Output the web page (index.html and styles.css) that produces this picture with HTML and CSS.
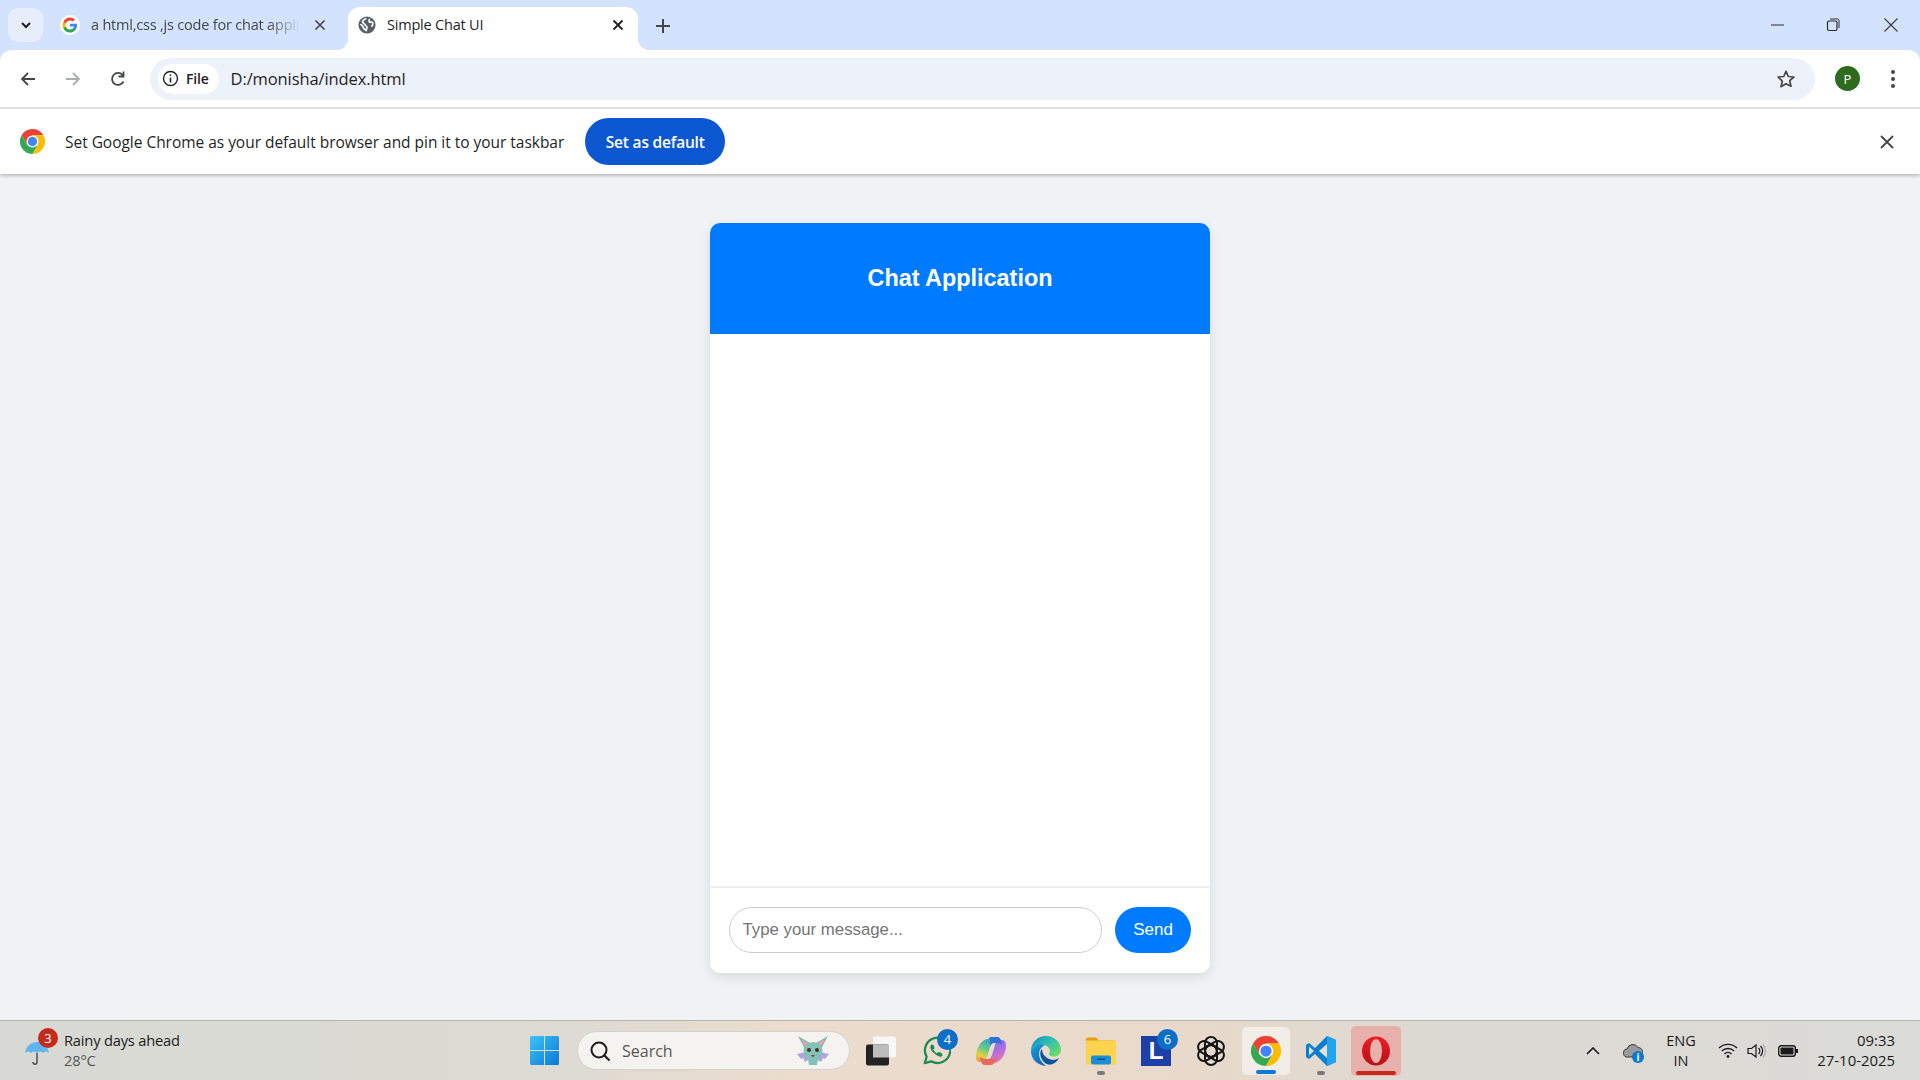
FILE: index.html
```html
<!DOCTYPE html>
<html>
<head>
    <title>Simple Chat UI</title>
    <link rel="stylesheet" href="styles.css">
</head>
<body>
    <svg class="defs" width="0" height="0">
        <symbol id="chrome" viewBox="0 0 48 48">
            <path d="M24 24 L24 12 H44.8 A24 24 0 0 0 3.2 12 L13.6 30 Z" fill="#ea4335"/>
            <path d="M24 24 L13.6 30 L3.2 12 A24 24 0 0 0 24 48 L34.4 30 Z" fill="#34a853"/>
            <path d="M24 24 L34.4 30 L24 48 A24 24 0 0 0 44.8 12 H24 Z" fill="#fbbc04"/>
            <circle cx="24" cy="24" r="11.5" fill="#fff"/>
            <circle cx="24" cy="24" r="9" fill="#4285f4"/>
        </symbol>
    </svg>

    <div class="tabstrip">
        <div class="tabsearch">
            <svg width="14" height="14" viewBox="0 0 14 14"><path d="M3 5l4 4 4-4" fill="none" stroke="#1f1f1f" stroke-width="2"/></svg>
        </div>
        <div class="tab">
            <svg class="favicon google" viewBox="0 0 48 48">
                <circle cx="24" cy="24" r="24" fill="#fff"/>
                <path d="M41 24.6c0-1.3-.1-2.5-.3-3.6H24v6.8h9.6c-.4 2.2-1.7 4.100-3.500 5.300v4.400h5.700C39.100 34.400 41 29.900 41 24.600z" fill="#4285f4"/>
                <path d="M24 42c4.800 0 8.800-1.600 11.800-4.400l-5.700-4.400c-1.600 1.100-3.700 1.700-6.100 1.700-4.700 0-8.600-3.100-10-7.400H8.100v4.600C11 37.900 17 42 24 42z" fill="#34a853"/>
                <path d="M14 27.500c-.4-1.100-.6-2.300-.6-3.500s.2-2.400.6-3.500v-4.600H8.100C6.800 18.300 6 21.100 6 24s.8 5.700 2.100 8.100z" fill="#fbbc04"/>
                <path d="M24 13.100c2.600 0 5 .9 6.800 2.700l5.100-5.100C32.800 7.800 28.800 6 24 6 17 6 11 10.100 8.100 15.900l5.900 4.600c1.400-4.300 5.300-7.400 10-7.400z" fill="#ea4335"/>
            </svg>
            <span class="tab-title faded">a html,css ,js code for chat appli</span>
            <svg class="tab-x" width="12" height="12" viewBox="0 0 12 12"><path d="M1.500 1.500l9 9M10.500 1.500l-9 9" stroke="#444746" stroke-width="1.600"/></svg>
        </div>
        <div class="tab active">
            <svg class="favicon" viewBox="0 0 20 20">
                <circle cx="10" cy="10" r="9.500" fill="#5b5e66"/>
                <path d="M9 2.500c-1 1.500-3.500 1.800-4 3.500-.3 1.300 1 2 2 2.800 1 .7 1 1.700 1.800 2.200.8.400 1.500.9 1.300 2-.2 1-1 1.500-.9 3-1.800-.5-3.300-2.400-4-4.500-.5-1.300-1.800-1.500-2.600-2.300M12.500 3c.5 1.500-1 2.500 0 3.500s3-.5 4 1c.3 1.500-.5 3-1.500 4.500" fill="none" stroke="#fff" stroke-width="1.800"/>
            </svg>
            <span class="tab-title">Simple Chat UI</span>
            <svg class="tab-x" width="12" height="12" viewBox="0 0 12 12"><path d="M1.500 1.500l9 9M10.500 1.500l-9 9" stroke="#1f1f1f" stroke-width="1.800"/></svg>
        </div>
        <svg class="newtab" width="16" height="16" viewBox="0 0 16 16"><path d="M8 1v14M1 8h14" stroke="#444746" stroke-width="2"/></svg>
        <div class="winctl">
            <svg width="14" height="14" viewBox="0 0 14 14"><path d="M0 7h13" stroke="#2a2a2a" stroke-width="1"/></svg>
            <svg width="14" height="14" viewBox="0 0 14 14"><rect x="1.500" y="3" width="9.500" height="9.500" rx="1.500" fill="none" stroke="#2a2a2a" stroke-width="1.200"/><path d="M4 1h7.500a1.500 1.500 0 0 1 1.500 1.500V10" fill="none" stroke="#2a2a2a" stroke-width="1"/></svg>
            <svg width="14" height="14" viewBox="0 0 14 14"><path d="M.5.500l13 13M13.500.500l-13 13" stroke="#3a3a3a" stroke-width="1.100"/></svg>
        </div>
    </div>

    <div class="toolbar">
        <svg class="nav" width="18" height="18" viewBox="0 0 18 18"><path d="M16 9H3M9 3L3 9l6 6" fill="none" stroke="#444746" stroke-width="1.800"/></svg>
        <svg class="nav" width="18" height="18" viewBox="0 0 18 18"><path d="M2 9h13M9 3l6 6-6 6" fill="none" stroke="#a9abad" stroke-width="1.800"/></svg>
        <svg class="nav" width="18" height="18" viewBox="0 0 18 18"><path d="M14.500 11.500A6 6 0 1 1 13.600 5M14.500 1.500v5h-5" fill="none" stroke="#444746" stroke-width="1.800"/></svg>
        <div class="omnibox">
            <div class="chip">
                <svg width="17" height="17" viewBox="0 0 17 17"><circle cx="8.500" cy="8.500" r="7" fill="none" stroke="#1f1f1f" stroke-width="1.400"/><path d="M8.500 7.500v5M8.500 4.500v1.600" stroke="#1f1f1f" stroke-width="1.500"/></svg>
                <span>File</span>
            </div>
            <span class="url">D:/monisha/index.html</span>
            <svg class="star" width="20" height="20" viewBox="0 0 20 20"><path d="M10 2.300l2.300 5.200 5.600.5-4.200 3.700 1.300 5.500L10 14.800l-5 2.900 1.300-5.500L2.100 8l5.600-.5z" fill="none" stroke="#444746" stroke-width="1.700" stroke-linejoin="round"/></svg>
        </div>
        <div class="avatar">P</div>
        <div class="kebab"><i></i><i></i><i></i></div>
    </div>

    <div class="infobar">
        <svg class="infobar-logo"><use href="#chrome"/></svg>
        <span class="infobar-text">Set Google Chrome as your default browser and pin it to your taskbar</span>
        <div class="set-default">Set as default</div>
        <svg class="infobar-x" width="14" height="14" viewBox="0 0 14 14"><path d="M1 1l12 12M13 1L1 13" stroke="#444746" stroke-width="1.800"/></svg>
    </div>

    <div class="page">
        <div class="chat">
            <div class="chat-header">Chat Application</div>
            <div class="chat-messages"></div>
            <div class="chat-input">
                <input class="msg" type="text" placeholder="Type your message...">
                <button class="send">Send</button>
            </div>
        </div>
    </div>

    <div class="taskbar">
        <div class="weather">
            <div class="weather-icon">
                <svg width="26" height="34" viewBox="0 0 26 34">
                    <path d="M1 17C2 10 7 6 13 6s11 4 12 11c-2-2-4-2-6 0-2-2-4-2-6 0-2-2-4-2-6 0-2-2-4-2-6 0z" fill="#62b4f0"/>
                    <path d="M13 17v9c0 3-4 3-4 0" fill="none" stroke="#555" stroke-width="1.600"/>
                </svg>
                <span class="weather-badge">3</span>
            </div>
            <div class="weather-text">
                <div>Rainy days ahead</div>
                <div class="dim">28°C</div>
            </div>
        </div>

        <div class="centre">
            <svg class="ic start" viewBox="0 0 29 29">
                <defs><linearGradient id="win" x1="0" y1="0" x2="1" y2="1"><stop offset="0" stop-color="#3cc5f8"/><stop offset="1" stop-color="#0a78d6"/></linearGradient></defs>
                <path d="M0 1.500Q0 0 1.500 0H14V14H0zM15 0H27.500Q29 0 29 1.500V14H15zM0 15H14V29H1.500Q0 29 0 27.500zM15 15H29V27.500Q29 29 27.500 29H15z" fill="url(#win)"/>
            </svg>
            <div class="searchbox">
                <svg width="22" height="22" viewBox="0 0 22 22"><circle cx="10" cy="10" r="7.500" fill="none" stroke="#1c1c1c" stroke-width="2"/><path d="M15.500 15.500l5 5" stroke="#1c1c1c" stroke-width="2.200"/></svg>
                <span class="search-label">Search</span>
                <svg class="bat" width="34" height="32" viewBox="0 0 34 32">
                    <path d="M10 17L1 19l4 5 2-1 2 4 5-3zM24 17l9 2-4 5-2-1-2 4-5-3z" fill="#b6a2dc"/>
                    <path d="M9 14L2 1l12 7z" fill="#7fb8b0"/>
                    <path d="M25 14L32 1 20 8z" fill="#7fb8b0"/>
                    <path d="M9 11L5 4l7 4zM25 11l4-7-7 4z" fill="#eda3ad"/>
                    <ellipse cx="17" cy="16" rx="9.500" ry="9" fill="#7fc4b8"/>
                    <path d="M12 24h10l-1 6h-8z" fill="#7fc4b8"/>
                    <circle cx="13" cy="15" r="2" fill="#5a2620"/><circle cx="21" cy="15" r="2" fill="#5a2620"/>
                    <path d="M15 20h4l-2 2.500z" fill="#a8322c"/>
                </svg>
            </div>
            <svg class="ic taskview" viewBox="0 0 30 29">
                <rect x="7" y="0" width="23" height="21" rx="2" fill="#f7f7f7"/>
                <rect x="0" y="8" width="23" height="21" rx="2" fill="#232323"/>
                <rect x="7" y="8" width="16" height="13" fill="#bdbdbd"/>
            </svg>
            <div class="slot">
                <svg class="ic" viewBox="0 0 30 32">
                    <path d="M3 29l2-7A13.500 13.500 0 1 1 10 27z" fill="none" stroke="#1d8a55" stroke-width="2.400" stroke-linejoin="round"/>
                    <path d="M10 9c-2 2-1 6 3 9.500s7 4.500 9 2.500l-1-3-3.500-1-1.500 1.500c-2-1-3-2.500-4-4l1.500-1.500-1-3.500z" fill="#1d8a55"/>
                </svg>
                <span class="count">4</span>
            </div>
            <svg class="ic" viewBox="0 0 30 28">
                <defs>
                    <linearGradient id="cop1" x1=".7" y1="0" x2=".2" y2="1"><stop offset="0" stop-color="#2f8fe6"/><stop offset=".5" stop-color="#5fc98a"/><stop offset=".8" stop-color="#e6d23c"/><stop offset="1" stop-color="#f59a3c"/></linearGradient>
                    <linearGradient id="cop2" x1=".3" y1="0" x2=".8" y2="1"><stop offset="0" stop-color="#5a78ee"/><stop offset=".5" stop-color="#b56ce0"/><stop offset="1" stop-color="#f37ea0"/></linearGradient>
                </defs>
                <path d="M12 2Q13 0 16 0H21Q24 0 25 4L26 8Q24 6 21 6H17Q15 7 14 10L11 20Q10 25 6 25H4Q0 25 0 19 0 13 4 7 8 2 12 2z" fill="url(#cop1)"/>
                <path d="M18 26Q17 28 14 28H9Q6 28 5 24L4 20Q6 22 9 22H13Q15 21 16 18L19 8Q20 3 24 3H26Q30 3 30 9 30 15 26 21 22 26 18 26z" fill="url(#cop2)"/>
                <path d="M5 24Q6 28 9 28H14Q17 28 18 26 20 24 21 21 17 22 13 22H9Q6 22 4 20z" fill="#f0663c" opacity=".75"/>
                <path d="M14 0H21Q24 0 25 4L26 8Q24 6 21 6H17Q15 7 14 9z" fill="#2a62d8" opacity=".7"/>
            </svg>
            <svg class="ic" viewBox="0 0 30 30">
                <defs>
                    <linearGradient id="edge1" x1="0" y1="0" x2="1" y2=".8"><stop offset="0" stop-color="#1585c9"/><stop offset=".5" stop-color="#2cc0b0"/><stop offset="1" stop-color="#72dc62"/></linearGradient>
                    <linearGradient id="edge2" x1="0" y1="0" x2=".5" y2="1"><stop offset="0" stop-color="#1aa0d8"/><stop offset="1" stop-color="#0c6cc4"/></linearGradient>
                </defs>
                <path d="M0 15C0 23 6 29 15 30 11 27 8 23 8 18 8 14 10 11 14 9L8 7 1 11z" fill="url(#edge2)"/>
                <path d="M11 13C8 16 9 22 13 26 18 31 25 28 28 22 24 25 19 24 16 22 13 20 11 17 11 13z" fill="#0b559f"/>
                <path d="M15 0C23 0 30 6 30 14 30 18 27 20.500 23 20.500 20.500 20.500 18 19.500 18 18 18 17.200 19 16.800 19 15 19 12 15.500 8.500 11 8.500 6 8.500 2 12 0 15 0 6 7 0 15 0z" fill="url(#edge1)"/>
            </svg>
            <div class="slot">
                <svg class="ic" viewBox="0 0 30 27">
                    <path d="M0 2q0-2 2-2h8l3 3h15q2 0 2 2v2H0z" fill="#e3a008"/>
                    <rect x="0" y="3" width="30" height="24" fill="#fcd34d"/>
                    <rect x="5" y="18" width="20" height="9" rx="2" fill="#1a8fd8"/>
                    <rect x="11" y="21" width="8" height="1.500" fill="#0a4a80"/>
                </svg>
                <span class="dot"></span>
            </div>
            <div class="slot">
                <div class="ic lingo">L</div>
                <span class="count">6</span>
            </div>
            <svg class="ic" viewBox="0 0 30 30">
                <g fill="none" stroke="#141414" stroke-width="2">
                    <rect x="9" y="1" width="12" height="20" rx="6"/>
                    <rect x="9" y="1" width="12" height="20" rx="6" transform="rotate(60 15 15)"/>
                    <rect x="9" y="1" width="12" height="20" rx="6" transform="rotate(120 15 15)"/>
                    <rect x="9" y="1" width="12" height="20" rx="6" transform="rotate(180 15 15)"/>
                    <rect x="9" y="1" width="12" height="20" rx="6" transform="rotate(240 15 15)"/>
                    <rect x="9" y="1" width="12" height="20" rx="6" transform="rotate(300 15 15)"/>
                </g>
            </svg>
            <div class="tile">
                <svg class="ic"><use href="#chrome"/></svg>
                <span class="run-line"></span>
            </div>
            <div class="slot">
                <svg class="ic" viewBox="0 0 30 30">
                    <path d="M21 0l9 4v22l-9 4-12-12-6 5-3-2v-12l3-2 6 5z" fill="#0b7fcf"/>
                    <path d="M21 0l9 4v22l-9 4z" fill="#22a2ef"/>
                    <path d="M21 8l-8 7 8 7z" fill="#e6dfd6"/>
                    <path d="M3 10.500L8 15l-5 4.500z" fill="#e6dfd6"/>
                </svg>
                <span class="dot"></span>
            </div>
            <div class="tile opera">
                <svg class="ic" viewBox="0 0 30 30">
                    <defs><linearGradient id="op" x1="0" y1="0" x2="0" y2="1"><stop offset="0" stop-color="#ee1c26"/><stop offset="1" stop-color="#b80f1a"/></linearGradient></defs>
                    <ellipse cx="15" cy="15" rx="14" ry="14.500" fill="url(#op)"/>
                    <ellipse cx="15" cy="15" rx="6" ry="12" fill="#e8b0aa"/>
                </svg>
                <span class="run-line"></span>
            </div>
        </div>

        <div class="tray">
            <svg class="chev" width="14" height="8" viewBox="0 0 14 8"><path d="M1 7l6-6 6 6" fill="none" stroke="#1a1a1a" stroke-width="1.600"/></svg>
            <div class="cloud">
                <svg width="20" height="20" viewBox="0 0 20 20"><path d="M5 16a4 4 0 0 1-1-8 6 6 0 0 1 11-1.500A4.500 4.500 0 0 1 15 16z" fill="#9a9a9a" stroke="#3a3a3a" stroke-width="1"/></svg>
                <span class="cloud-i">i</span>
            </div>
            <div class="lang"><div>ENG</div><div>IN</div></div>
            <svg class="wifi" width="20" height="15" viewBox="0 0 20 15"><path d="M1 5a13 13 0 0 1 18 0M3.800 8a9 9 0 0 1 12.400 0M6.500 11a5 5 0 0 1 7 0" fill="none" stroke="#1a1a1a" stroke-width="1.400"/><circle cx="10" cy="13.500" r="1.400" fill="#1a1a1a"/></svg>
            <svg class="vol" width="20" height="16" viewBox="0 0 20 16"><path d="M1 5.500h3.500L9 2v12l-4.500-3.500H1z" fill="none" stroke="#1a1a1a" stroke-width="1.200"/><path d="M11.500 5a4 4 0 0 1 0 6M13.500 3a7 7 0 0 1 0 10" fill="none" stroke="#1a1a1a" stroke-width="1.200"/><path d="M16 1.500a10 10 0 0 1 0 13" fill="none" stroke="#aaa" stroke-width="1.200"/></svg>
            <svg class="batt" width="20" height="12" viewBox="0 0 20 12"><rect x=".7" y=".7" width="16.600" height="10.600" rx="2.500" fill="none" stroke="#1a1a1a" stroke-width="1.400"/><rect x="2.500" y="2.500" width="13" height="7" rx="1" fill="#1a1a1a"/><rect x="18" y="4" width="2" height="4" fill="#1a1a1a"/></svg>
            <div class="clock"><div>09:33</div><div>27-10-2025</div></div>
        </div>
    </div>
</body>
</html>
```

FILE: styles.css
```css
* {
    box-sizing: border-box;
}
html, body {
    margin: 0;
    height: 100%;
}
body {
    width: 1920px;
    height: 1080px;
    overflow: hidden;
    display: flex;
    flex-direction: column;
    background-color: #f0f2f5;
    font-family: "Open Sans", "Noto Sans", sans-serif;
    color: #1f1f1f;
}
.defs {
    position: absolute;
}

/* browser chrome */
.tabstrip {
    height: 62px;
    margin-bottom: -12px;
    flex: none;
    display: flex;
    align-items: flex-end;
    padding: 0 0 12px 8px;
    background-color: #d3e3fd;
}
.tabsearch {
    width: 35px;
    height: 34px;
    margin-bottom: 8px;
    margin-right: 10px;
    display: flex;
    align-items: center;
    justify-content: center;
    border-radius: 10px;
    background-color: #e6eefc;
}
.tab {
    width: 290px;
    height: 43px;
    padding: 0 17px 8px 7px;
    display: flex;
    align-items: center;
    font-size: 14.5px;
    letter-spacing: -.2px;
    color: #444746;
}
.tab.active {
    width: 290px;
    margin-left: 5px;
    padding: 0 14px 8px 10px;
    border-radius: 12px 12px 0 0;
    background-color: #fff;
    color: #1f1f1f;
    position: relative;
}
.tab.active::before,
.tab.active::after {
    content: "";
    position: absolute;
    bottom: 0;
    width: 12px;
    height: 12px;
}
.tab.active::before {
    left: -12px;
    background: radial-gradient(circle at 0 0, transparent 12px, #fff 12.5px);
}
.tab.active::after {
    right: -12px;
    background: radial-gradient(circle at 100% 0, transparent 12px, #fff 12.5px);
}
.favicon {
    width: 18px;
    height: 18px;
    flex: none;
}
.favicon.google {
    width: 20px;
    height: 20px;
}
.tab-title {
    flex: 1;
    margin-left: 11px;
    white-space: nowrap;
    overflow: hidden;
}
.tab .faded {
    -webkit-mask-image: linear-gradient(90deg, #000 85%, transparent);
    mask-image: linear-gradient(90deg, #000 85%, transparent);
}
.tab-x {
    flex: none;
    margin-left: 14px;
}
.newtab {
    margin: 0 0 16px 17px;
}
.winctl {
    margin-left: auto;
    margin-bottom: 18px;
    padding-right: 22px;
    display: flex;
    gap: 41px;
}
.winctl svg:last-child {
    margin-left: 3px;
}
.toolbar {
    height: 57px;
    flex: none;
    display: flex;
    align-items: center;
    padding-left: 19px;
    border-radius: 12px 12px 0 0;
    background-color: #fff;
    position: relative;
}
.nav {
    flex: none;
    margin-right: 27px;
}
.omnibox {
    width: 1665px;
    height: 42px;
    margin-left: -4px;
    padding: 0 19px 0 8px;
    display: flex;
    align-items: center;
    border-radius: 21px;
    background-color: #ecf1fa;
}
.chip {
    height: 30px;
    padding: 0 10px 0 4px;
    display: flex;
    align-items: center;
    gap: 7px;
    border-radius: 15px;
    background-color: #fff;
    font-size: 14px;
    font-weight: 600;
    letter-spacing: -.2px;
}
.url {
    margin-left: 12px;
    flex: 1;
    font-size: 16.5px;
    letter-spacing: -.1px;
}
.avatar {
    width: 25px;
    height: 25px;
    margin-left: 20px;
    flex: none;
    display: flex;
    align-items: center;
    justify-content: center;
    border-radius: 50%;
    background-color: #2f6b1e;
    color: #fff;
    font-size: 13px;
}
.kebab {
    margin-left: 31px;
    display: flex;
    flex-direction: column;
    gap: 3px;
}
.kebab i {
    width: 4px;
    height: 4px;
    border-radius: 50%;
    background-color: #444746;
}
.infobar {
    height: 67px;
    flex: none;
    display: flex;
    align-items: center;
    padding: 0 26px 0 20px;
    border-top: 2px solid #e1e1e1;
    background-color: #fff;
    box-shadow: 0 2px 3px rgba(0, 0, 0, .22);
    position: relative;
}
.infobar-logo {
    width: 25px;
    height: 25px;
    flex: none;
}
.infobar-text {
    margin-left: 20px;
    font-size: 15.5px;
    letter-spacing: -.03px;
    white-space: nowrap;
}
.set-default {
    width: 140px;
    height: 47px;
    margin-left: 21px;
    display: flex;
    align-items: center;
    justify-content: center;
    border-radius: 24px;
    background-color: #0b57d0;
    color: #fff;
    font-size: 15.5px;
    font-weight: 600;
    letter-spacing: -.2px;
}
.infobar-x {
    margin-left: auto;
}

/* the chat page itself */
.page {
    flex: 1;
    padding-top: 49px;
    display: flex;
    justify-content: center;
}
.chat {
    width: 500px;
    height: 750px;
    display: flex;
    flex-direction: column;
    border-radius: 10px;
    background-color: #fff;
    box-shadow: 0 4px 12px rgba(0, 0, 0, .1);
    overflow: hidden;
}
.chat-header {
    height: 111px;
    flex: none;
    display: flex;
    align-items: center;
    justify-content: center;
    padding-bottom: 1px;
    background-color: #007bff;
    color: #fff;
    font-family: "Liberation Sans", Arial, sans-serif;
    font-size: 23.4px;
    font-weight: bold;
}
.chat-messages {
    flex: 1;
}
.chat-input {
    padding: 19px 19px 20px;
    display: flex;
    gap: 13px;
    border-top: 2px solid #f0f0f0;
}
.msg {
    flex: 1;
    min-width: 0;
    height: 46px;
    padding: 0 13px 0 12.5px;
    border: 1px solid #ccc;
    border-radius: 23px;
    outline: none;
    font-family: "Liberation Sans", Arial, sans-serif;
    font-size: 16.8px;
}
.msg::placeholder {
    color: #757575;
}
.send {
    width: 76px;
    height: 46px;
    padding: 0;
    border: none;
    border-radius: 23px;
    background-color: #007bff;
    color: #fff;
    font-family: "Liberation Sans", Arial, sans-serif;
    font-size: 17px;
}

/* windows taskbar */
.taskbar {
    height: 60px;
    flex: none;
    display: flex;
    align-items: center;
    border-top: 1px solid #b5b5b2;
    background: linear-gradient(90deg, #d8d9d4 0%, #dcdbd4 28%, #ecdccd 42%, #e8d9cb 62%, #dcdad4 75%, #dbdbd7 100%);
    font-size: 14px;
}
.weather {
    width: 530px;
    flex: none;
    display: flex;
    align-items: center;
    padding-left: 24px;
}
.weather-icon {
    width: 26px;
    height: 34px;
    margin-top: 4px;
    position: relative;
}
.weather-badge {
    position: absolute;
    top: -8px;
    left: 14px;
    width: 20px;
    height: 20px;
    display: flex;
    align-items: center;
    justify-content: center;
    border-radius: 50%;
    background-color: #c42b1c;
    color: #fff;
    font-size: 13px;
}
.weather-text {
    margin: -2px 0 0 14px;
    font-size: 14.7px;
    line-height: 20px;
    letter-spacing: -.2px;
    color: #1c1c1c;
}
.dim {
    color: #555;
}
.centre {
    width: 871px;
    flex: none;
    display: flex;
    align-items: center;
}
.ic {
    width: 30px;
    height: 30px;
    flex: none;
    display: block;
}
.start {
    width: 29px;
    height: 29px;
}
.searchbox {
    width: 273px;
    height: 39px;
    margin-left: 18px;
    padding: 0 19px 0 11px;
    display: flex;
    align-items: center;
    border: 1px solid #d2d1cc;
    border-radius: 20px;
    background-color: #f5f3ef;
}
.search-label {
    margin-left: 11px;
    flex: 1;
    font-size: 16px;
    color: #555;
}
.taskview {
    margin-left: 16px;
    margin-right: 25px;
}
.centre > svg.ic:not(.start):not(.taskview) {
    margin-right: 25px;
}
.slot {
    width: 30px;
    margin-right: 25px;
    position: relative;
}
.count {
    position: absolute;
    top: -7px;
    right: -7px;
    width: 21px;
    height: 21px;
    display: flex;
    align-items: center;
    justify-content: center;
    border-radius: 50%;
    background-color: #0b6fc7;
    color: #fff;
    font-size: 13px;
}
.dot {
    position: absolute;
    left: 11px;
    top: 35px;
    width: 8px;
    height: 4px;
    border-radius: 2px;
    background-color: #7a7a7a;
}
.lingo {
    display: flex;
    align-items: center;
    justify-content: center;
    background-color: #1c3fa8;
    color: #fff;
    font-family: "Liberation Sans", Arial, sans-serif;
    font-size: 24px;
    font-weight: bold;
}
.tile {
    width: 48px;
    height: 48px;
    margin-left: -9px;
    margin-right: 16px;
    flex: none;
    display: flex;
    align-items: center;
    justify-content: center;
    border-radius: 5px;
    background-color: #f2ede7;
    position: relative;
}
.tile.opera {
    width: 50px;
    height: 50px;
    margin-left: -10px;
    margin-right: 0;
    background-color: #e8b0aa;
}
.run-line {
    position: absolute;
    left: 14px;
    right: 14px;
    bottom: 1px;
    height: 4px;
    border-radius: 2px;
    background-color: #0a78d6;
}
.opera .run-line {
    left: 5px;
    right: 5px;
    background-color: #c42b1c;
}
.tray {
    flex: 1;
    display: flex;
    align-items: center;
    padding-left: 185px;
    line-height: 20px;
    color: #1c1c1c;
}
.chev {
    flex: none;
}
.cloud {
    width: 20px;
    height: 20px;
    margin-left: 23px;
    position: relative;
}
.cloud-i {
    position: absolute;
    right: -1px;
    bottom: -2px;
    width: 12px;
    height: 12px;
    display: flex;
    align-items: center;
    justify-content: center;
    border-radius: 50%;
    background-color: #0b78d0;
    color: #fff;
    font-size: 10px;
    font-weight: bold;
}
.lang {
    width: 40px;
    margin-left: 18px;
    font-size: 14.5px;
    text-align: center;
}
.wifi {
    margin-left: 17px;
    flex: none;
}
.vol {
    margin-left: 9px;
    flex: none;
}
.batt {
    margin-left: 11px;
    flex: none;
}
.clock {
    margin: -1px 0 0 auto;
    padding-right: 25px;
    font-size: 14.9px;
    text-align: right;
    white-space: nowrap;
}
```
